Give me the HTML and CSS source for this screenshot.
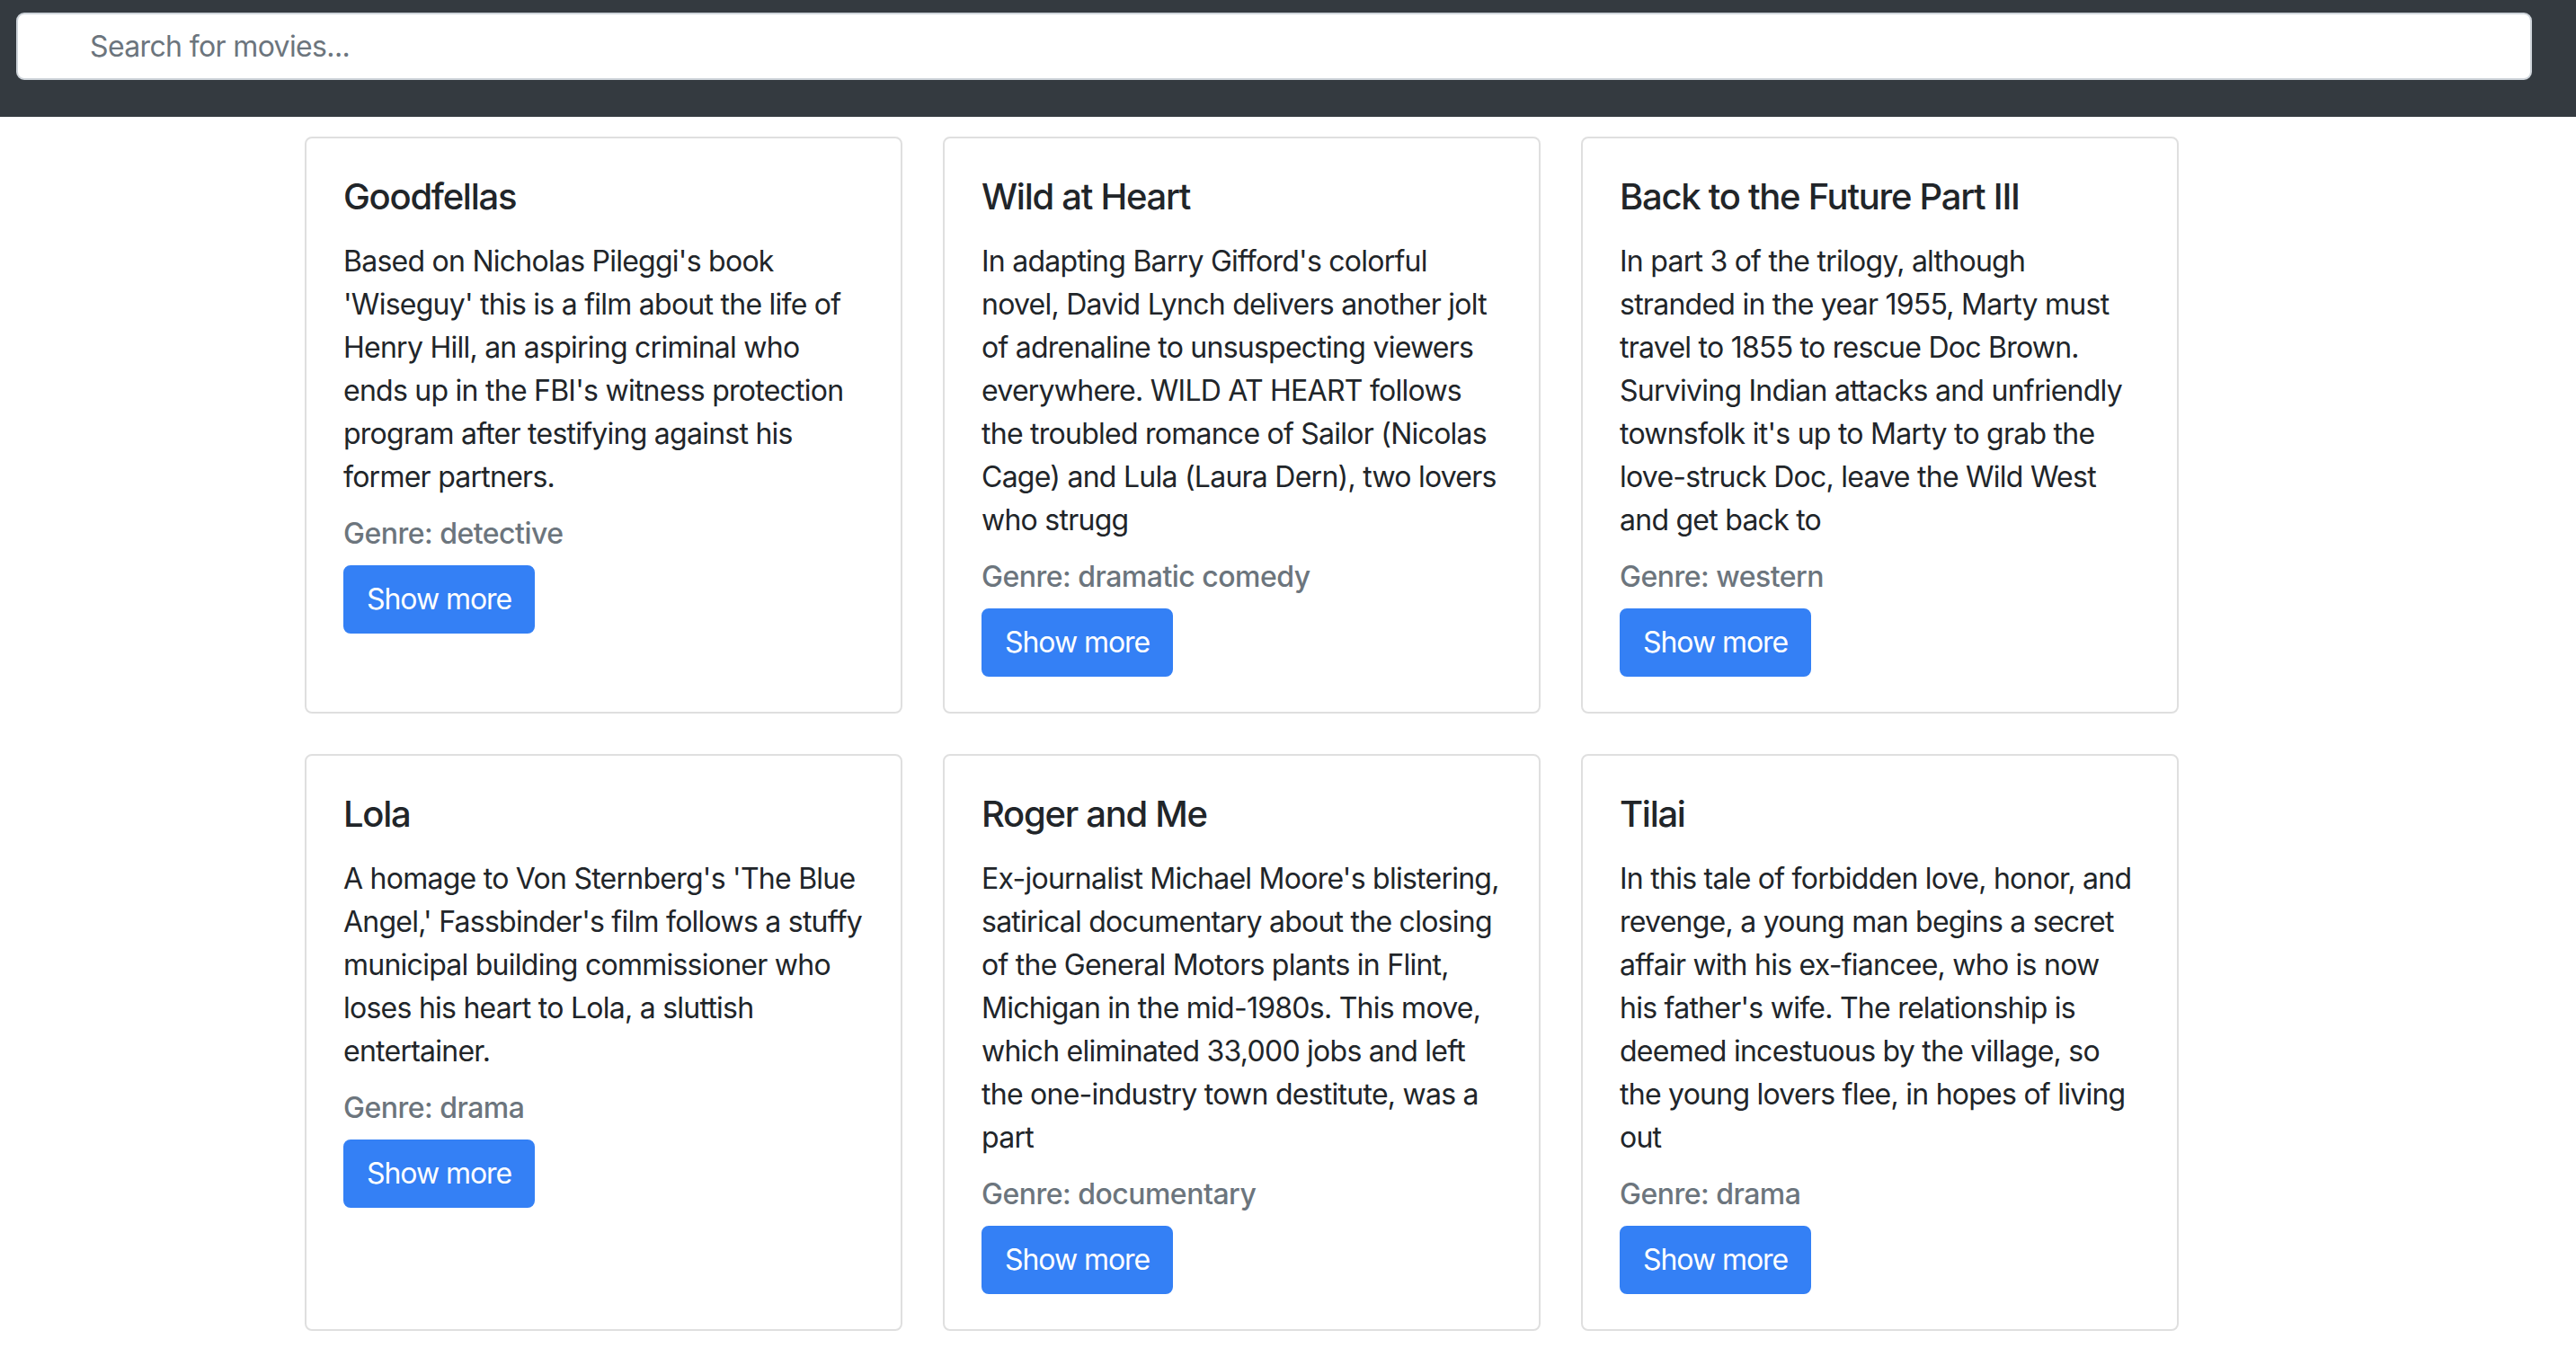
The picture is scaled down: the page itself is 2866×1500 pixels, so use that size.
FILE: index.html
```html
<!DOCTYPE html>
<html lang="en">
<head>
<meta charset="utf-8">
<title>Movies</title>
<link rel="stylesheet" href="styles.css">
</head>
<body>
<header class="topbar">
  <input class="search" type="text" placeholder="Search for movies...">
</header>
<main class="movies">
  <div class="card">
    <h5 class="card-title">Goodfellas</h5>
    <p class="card-text">Based on Nicholas Pileggi's book 'Wiseguy' this is a film about the life of Henry Hill, an aspiring criminal who ends up in the FBI's witness protection program after testifying against his former partners.</p>
    <h6 class="card-subtitle">Genre: detective</h6>
    <button class="btn">Show more</button>
  </div>
  <div class="card">
    <h5 class="card-title">Wild at Heart</h5>
    <p class="card-text">In adapting Barry Gifford's colorful novel, David Lynch delivers another jolt of adrenaline to unsuspecting viewers everywhere. WILD AT HEART follows the troubled romance of Sailor (Nicolas Cage) and Lula (Laura Dern), two lovers who strugg</p>
    <h6 class="card-subtitle">Genre: dramatic comedy</h6>
    <button class="btn">Show more</button>
  </div>
  <div class="card">
    <h5 class="card-title">Back to the Future Part III</h5>
    <p class="card-text">In part 3 of the trilogy, although stranded in the year 1955, Marty must travel to 1855 to rescue Doc Brown. Surviving Indian attacks and unfriendly townsfolk it's up to Marty to grab the love-struck Doc, leave the Wild West and get back to</p>
    <h6 class="card-subtitle">Genre: western</h6>
    <button class="btn">Show more</button>
  </div>
  <div class="card">
    <h5 class="card-title">Lola</h5>
    <p class="card-text">A homage to Von Sternberg's 'The Blue Angel,' Fassbinder's film follows a stuffy municipal building commissioner who loses his heart to Lola, a sluttish entertainer.</p>
    <h6 class="card-subtitle">Genre: drama</h6>
    <button class="btn">Show more</button>
  </div>
  <div class="card">
    <h5 class="card-title">Roger and Me</h5>
    <p class="card-text">Ex-journalist Michael Moore's blistering, satirical documentary about the closing of the General Motors plants in Flint, Michigan in the mid-1980s. This move, which eliminated 33,000 jobs and left the one-industry town destitute, was a part</p>
    <h6 class="card-subtitle">Genre: documentary</h6>
    <button class="btn">Show more</button>
  </div>
  <div class="card">
    <h5 class="card-title">Tilai</h5>
    <p class="card-text">In this tale of forbidden love, honor, and revenge, a young man begins a secret affair with his ex-fiancee, who is now his father's wife. The relationship is deemed incestuous by the village, so the young lovers flee, in hopes of living out</p>
    <h6 class="card-subtitle">Genre: drama</h6>
    <button class="btn">Show more</button>
  </div>
</main>
</body>
</html>
```

FILE: styles.css
```css
* {
  box-sizing: border-box;
}

html, body {
  margin: 0;
  padding: 0;
  background: #ffffff;
}

body {
  font-family: Inter, "Noto Sans", "Liberation Sans", sans-serif;
  font-size: 32px;
  line-height: 48px;
  color: #212529;
  letter-spacing: -0.0234em;
}

.topbar {
  background: #343a40;
  padding: 14px 49px 41px 18px;
}

.search {
  display: block;
  width: 100%;
  height: 75px;
  border: 2px solid #ced4da;
  border-radius: 9px;
  background: #ffffff;
  padding: 0 24px 0 80px;
  font-family: inherit;
  font-size: 32px;
  letter-spacing: -0.02em;
  color: #495057;
  outline: none;
}

.search::placeholder {
  color: #6c757d;
}

.movies {
  display: grid;
  grid-template-columns: repeat(3, 665px);
  column-gap: 45px;
  row-gap: 45px;
  padding: 22px 0 0 339px;
}

.card {
  border: 2px solid rgba(0, 0, 0, 0.125);
  border-radius: 8px;
  padding: 41px 40px 39px 41px;
  display: flex;
  flex-direction: column;
  align-items: flex-start;
}

.card-title {
  margin: 0 0 24px;
  font-size: 40px;
  line-height: 48px;
  font-weight: 500;
  letter-spacing: -0.032em;
}

.card-text {
  margin: 0 0 32px;
}

.card-subtitle {
  margin: -12px 0 16px;
  font-size: 32px;
  line-height: 38px;
  font-weight: 500;
  letter-spacing: -0.016em;
  color: #6c757d;
}

.btn {
  font-family: inherit;
  font-size: 32px;
  line-height: 48px;
  font-weight: 400;
  letter-spacing: -0.033em;
  color: #ffffff;
  background: #3480f5;
  border: 2px solid #3480f5;
  border-radius: 8px;
  padding: 12px 24px;
  cursor: pointer;
}
```
